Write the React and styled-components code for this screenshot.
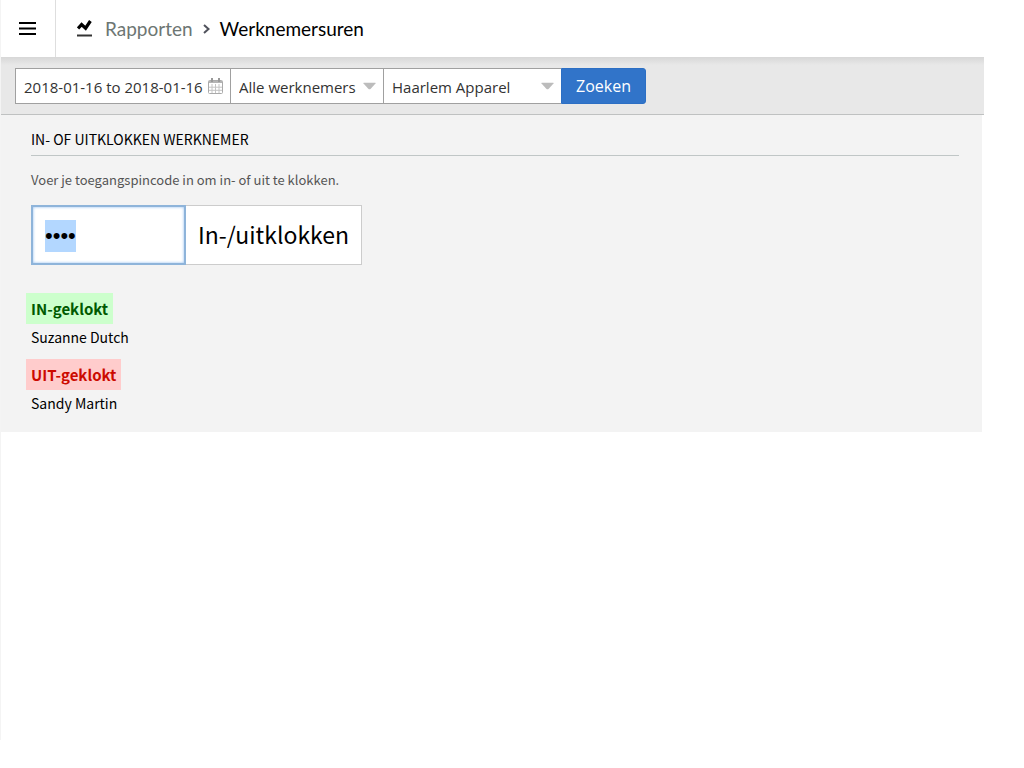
import { useEffect, useRef, useState } from "react";
import styled, { createGlobalStyle } from "styled-components";

const GlobalStyle = createGlobalStyle`
  * {
    box-sizing: border-box;
  }
  body {
    margin: 0;
    background: #fff;
    color: #000;
    font-family: "Noto Sans CJK SC", "Noto Sans", sans-serif;
  }
  h2, h3, p, ul {
    margin: 0;
    padding: 0;
  }
  button, input, select {
    margin: 0;
    border-radius: 0;
  }
`;

const Style = {
  Page: styled.div`
    margin-right: 40px;
    min-height: 740px;
    border-left: 1px solid #f4f4f4;
  `,
  Header: styled.header`
    display: flex;
    height: 57px;
    background: #fff;
  `,
  MenuButton: styled.button`
    display: flex;
    align-items: center;
    justify-content: center;
    width: 55px;
    padding: 0 2px 0 0;
    border: none;
    border-right: 1px solid #dedede;
    background: none;
    cursor: pointer;
  `,
  Crumbs: styled.nav`
    display: flex;
    align-items: center;
    padding-left: 21px;
    font-family: Lato, sans-serif;
    font-size: 19px;
    line-height: 24px;
  `,
  CrumbLink: styled.a`
    margin: 0 10px 0 12px;
    color: #6d7673;
    text-decoration: none;
  `,
  CrumbCurrent: styled.span`
    margin-left: 10px;
    color: #000;
  `,
  Toolbar: styled.form`
    display: flex;
    padding: 10px 14px;
    border-top: 1px solid #d8d8d8;
    border-bottom: 1px solid #bfc1c1;
    background: linear-gradient(#d9d9d9, #e8e8e8 7px);
    font-family: "Open Sans", sans-serif;
  `,
  Field: styled.label`
    position: relative;
    width: ${(props) => props.$width};
    height: 36px;
    border: 1px solid #a0a0a0;
    border-left-width: ${(props) => (props.$first ? "1px" : "0")};
    border-right-width: ${(props) => (props.$last ? "0" : "1px")};
    background: #fff;
    svg {
      position: absolute;
      top: 50%;
      right: 7px;
      transform: translateY(-50%);
      pointer-events: none;
    }
  `,
  DateInput: styled.input`
    width: 100%;
    height: 100%;
    padding: 1px 24px 0 8px;
    border: none;
    outline: none;
    background: none;
    color: #333;
    font: 15px "Open Sans", sans-serif;
  `,
  Select: styled.select`
    appearance: none;
    width: 100%;
    height: 100%;
    padding: 1px 24px 0 8px;
    border: none;
    outline: none;
    background: none;
    color: #333;
    font: 15px "Open Sans", sans-serif;
  `,
  SearchButton: styled.button`
    height: 36px;
    padding: 0 14px;
    border: 1px solid #2c6fc4;
    border-radius: 0 3px 3px 0;
    background: #3174c9;
    color: #fff;
    font: 16px "Open Sans", sans-serif;
    cursor: pointer;
  `,
  Panel: styled.main`
    margin-right: 2px;
    padding: 14px 23px 7px 30px;
    background: #f3f3f3;
  `,
  Title: styled.h2`
    padding-bottom: 5px;
    border-bottom: 1px solid #c0c6c6;
    font-size: 14px;
    font-weight: 400;
    line-height: 21px;
  `,
  Hint: styled.p`
    padding: 12px 0 14px;
    color: #555;
    font-size: 13px;
    line-height: 23px;
  `,
  PinForm: styled.form`
    display: flex;
    height: 60px;
    margin-bottom: 28px;
  `,
  PinInput: styled.input`
    width: 155px;
    padding: 2px 12px 0;
    border: 2px solid #8eb4da;
    outline: none;
    box-shadow: inset 0 0 3px #8ebcf0;
    background: #fff;
    color: #000;
    font: 22px "Liberation Sans", sans-serif;
    line-height: 32px;
    &::selection {
      background: #b3d7ff;
      color: #000;
    }
  `,
  ClockButton: styled.button`
    padding: 0 12px 3px;
    border: 1px solid #ccc;
    border-left: none;
    background: #fff;
    color: #000;
    font: 23px "Noto Sans CJK SC", "Noto Sans", sans-serif;
    cursor: pointer;
  `,
  Group: styled.section`
    margin-bottom: 8px;
    font-size: 14px;
  `,
  Status: styled.h3`
    width: fit-content;
    margin-left: -5px;
    padding: 0 5px;
    background: ${(props) => (props.$in ? "#ccffcc" : "#ffcccc")};
    color: ${(props) => (props.$in ? "#005900" : "#cc0a00")};
    font-size: 15px;
    font-weight: 700;
    line-height: 31px;
  `,
  Names: styled.ul`
    list-style: none;
    line-height: 27px;
  `,
};

const groups = [
  { id: "in", label: "IN-geklokt", names: ["Suzanne Dutch"] },
  { id: "uit", label: "UIT-geklokt", names: ["Sandy Martin"] },
];

function MenuIcon() {
  return (
    <svg width="17" height="13" viewBox="0 0 17 13" aria-hidden="true">
      <path d="M0 1h17M0 6.5h17M0 12h17" stroke="#000" strokeWidth="2" />
    </svg>
  );
}

function ReportIcon() {
  return (
    <svg width="16" height="17" viewBox="0 0 16 17" aria-hidden="true">
      <path d="M1 8.5L4.6 4.6L8.6 8.2L13.4 1" fill="none" stroke="#000" strokeWidth="3.2" />
      <path d="M0 15.5h15" stroke="#333" strokeWidth="2" />
    </svg>
  );
}

function ChevronIcon() {
  return (
    <svg width="7" height="10" viewBox="0 0 7 10" aria-hidden="true">
      <path d="M1 1l4.5 4L1 9" fill="none" stroke="#50525c" strokeWidth="2" />
    </svg>
  );
}

function CalendarIcon() {
  return (
    <svg width="15" height="16" viewBox="0 0 15 16" aria-hidden="true">
      <rect x="0.5" y="2.5" width="14" height="13" rx="1" fill="#fff" stroke="#aaa" />
      <path d="M1 4h13" stroke="#b4b4b4" strokeWidth="2" />
      <path d="M4 6v9M7.5 6v9M11 6v9M1 9.2h13M1 12.3h13" stroke="#c4c4c4" />
      <path d="M4 0v4M11 0v4" stroke="#999" strokeWidth="2" />
    </svg>
  );
}

function ArrowIcon() {
  return (
    <svg width="13" height="7" viewBox="0 0 13 7" aria-hidden="true">
      <path d="M1 0h11q1 0 .5 1L7.5 6.5q-1 1-2 0L.5 1Q0 0 1 0z" fill="#bcbcbc" />
    </svg>
  );
}

function SelectField({ label, options, width, last }) {
  return (
    <Style.Field $width={width} $last={last}>
      <Style.Select aria-label={label}>
        {options.map((option) => (
          <option key={option}>{option}</option>
        ))}
      </Style.Select>
      <ArrowIcon />
    </Style.Field>
  );
}

function PinEntry() {
  const [pin, setPin] = useState("1234");
  const pinRef = useRef(null);

  useEffect(() => {
    pinRef.current.focus();
    pinRef.current.select();
  }, []);

  return (
    <Style.PinForm onSubmit={(e) => e.preventDefault()}>
      <Style.PinInput
        ref={pinRef}
        type="password"
        aria-label="Toegangspincode"
        value={pin}
        onChange={(e) => setPin(e.target.value)}
      />
      <Style.ClockButton type="submit">In-/uitklokken</Style.ClockButton>
    </Style.PinForm>
  );
}

function App() {
  const [period, setPeriod] = useState("2018-01-16 to 2018-01-16");

  return (
    <>
      <GlobalStyle />
      <Style.Page>
        <Style.Header>
          <Style.MenuButton type="button" aria-label="Menu">
            <MenuIcon />
          </Style.MenuButton>
          <Style.Crumbs>
            <ReportIcon />
            <Style.CrumbLink href="#rapporten">Rapporten</Style.CrumbLink>
            <ChevronIcon />
            <Style.CrumbCurrent>Werknemersuren</Style.CrumbCurrent>
          </Style.Crumbs>
        </Style.Header>
        <Style.Toolbar onSubmit={(e) => e.preventDefault()}>
          <Style.Field $width="216px" $first>
            <Style.DateInput
              type="text"
              aria-label="Periode"
              value={period}
              onChange={(e) => setPeriod(e.target.value)}
            />
            <CalendarIcon />
          </Style.Field>
          <SelectField label="Werknemer" options={["Alle werknemers"]} width="153px" />
          <SelectField label="Winkel" options={["Haarlem Apparel"]} width="177px" last />
          <Style.SearchButton type="submit">Zoeken</Style.SearchButton>
        </Style.Toolbar>
        <Style.Panel>
          <Style.Title>IN- OF UITKLOKKEN WERKNEMER</Style.Title>
          <Style.Hint>Voer je toegangspincode in om in- of uit te klokken.</Style.Hint>
          <PinEntry />
          {groups.map((group) => (
            <Style.Group key={group.id}>
              <Style.Status $in={group.id === "in"}>{group.label}</Style.Status>
              <Style.Names>
                {group.names.map((name) => (
                  <li key={name}>{name}</li>
                ))}
              </Style.Names>
            </Style.Group>
          ))}
        </Style.Panel>
      </Style.Page>
    </>
  );
}

export default App;
